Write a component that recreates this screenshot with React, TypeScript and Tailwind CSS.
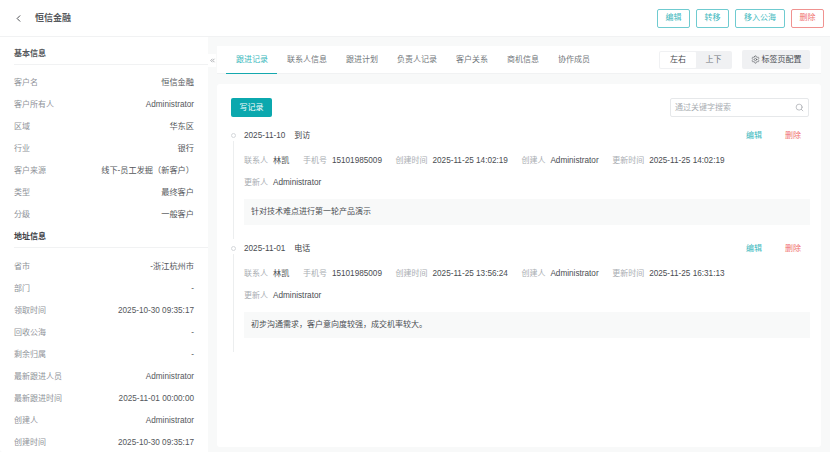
import { ChevronLeft, ChevronsLeft, Search, Settings } from 'lucide-react'

const BASIC = [
  ['客户名', '恒信金融'],
  ['客户所有人', 'Administrator'],
  ['区域', '华东区'],
  ['行业', '银行'],
  ['客户来源', '线下-员工发掘（新客户）'],
  ['类型', '最终客户'],
  ['分级', '一般客户'],
]

const ADDRESS = [
  ['省市', '-浙江杭州市'],
  ['部门', '-'],
  ['领取时间', '2025-10-30 09:35:17'],
  ['回收公海', '-'],
  ['剩余归属', '-'],
  ['最新跟进人员', 'Administrator'],
  ['最新跟进时间', '2025-11-01 00:00:00'],
  ['创建人', 'Administrator'],
  ['创建时间', '2025-10-30 09:35:17'],
]

const TABS = ['跟进记录', '联系人信息', '跟进计划', '负责人记录', '客户关系', '商机信息', '协作成员']

const RECORDS = [
  {
    date: '2025-11-10',
    kind: '到访',
    created: '2025-11-25 14:02:19',
    updated: '2025-11-25 14:02:19',
    note: '针对技术难点进行第一轮产品演示',
  },
  {
    date: '2025-11-01',
    kind: '电话',
    created: '2025-11-25 13:56:24',
    updated: '2025-11-25 16:31:13',
    note: '初步沟通需求，客户意向度较强，成交机率较大。',
  },
]

function Row({ label, value }: { label: string; value: string }) {
  return (
    <div className="flex h-[22px] items-center justify-between pr-[14px]">
      <span className="text-[#8f9399]">{label}</span>
      <span className="text-[8.2px] text-[#55585c]">{value}</span>
    </div>
  )
}

function Field({ label, value }: { label: string; value: string }) {
  return (
    <span className="flex items-center gap-[5px]">
      <span className="text-[#a9adb2]">{label}</span>
      <span className="text-[8.2px] text-[#4a4d52]">{value}</span>
    </span>
  )
}

function Record({ r }: { r: (typeof RECORDS)[number] }) {
  return (
    <div className="relative h-[113px] pl-[27px]">
      <span className="absolute left-[14px] top-[3px] size-[5px] rounded-full border border-[#d5d8db] bg-white" />
      <span className="absolute bottom-[4px] left-[16px] top-[11px] w-px bg-[#eceeef]" />
      <div className="flex h-[12px] items-center pr-[20px]">
        <span className="text-[8.2px] text-[#4a4d52]">{r.date}</span>
        <span className="ml-[9px] text-[#3d4045]">{r.kind}</span>
        <span className="ml-auto text-[#3bb8bd]">编辑</span>
        <span className="ml-[23px] text-[#f0716f]">删除</span>
      </div>
      <div className="mt-[13px] flex h-[12px] items-center gap-[13.5px]">
        <Field label="联系人" value="林凯" />
        <Field label="手机号" value="15101985009" />
        <Field label="创建时间" value={r.created} />
        <Field label="创建人" value="Administrator" />
        <Field label="更新时间" value={r.updated} />
      </div>
      <div className="mt-[10px] flex h-[12px] items-center">
        <Field label="更新人" value="Administrator" />
      </div>
      <div className="mr-[11px] mt-[10px] flex h-[26px] items-center bg-[#f8f9f9] pl-[7px] text-[#4a4d52]">{r.note}</div>
    </div>
  )
}

export default function App() {
  return (
    <div className="flex h-[452px] w-[830px] flex-col overflow-hidden bg-[#f8f9f9] font-['Liberation_Sans','Noto_Sans_CJK_SC',sans-serif] text-[8px] leading-none">
      {/* header */}
      <header className="flex h-[37px] shrink-0 items-center border-b border-[#f1f2f3] bg-white pl-[13px] pr-[6px]">
        <ChevronLeft className="size-[11px] text-[#3d4045]" strokeWidth={2} />
        <span className="ml-[11px] text-[9px] font-bold text-[#55585c]">恒信金融</span>
        <div className="ml-auto flex gap-[6px]">
          <button className="h-[19px] w-[33px] rounded-[2px] border border-[#6fcbd0] text-[#3bb8bd]">编辑</button>
          <button className="h-[19px] w-[33px] rounded-[2px] border border-[#6fcbd0] text-[#3bb8bd]">转移</button>
          <button className="h-[19px] w-[50px] rounded-[2px] border border-[#6fcbd0] text-[#3bb8bd]">移入公海</button>
          <button className="h-[19px] w-[33px] rounded-[2px] border border-[#f09290] text-[#f0716f]">删除</button>
        </div>
      </header>

      <div className="flex min-h-0 flex-1">
        {/* customer details */}
        <aside className="w-[208px] shrink-0 overflow-hidden rounded-bl-[3px] bg-white pl-[14px]">
          <div className="flex h-[28px] items-center border-b border-[#f1f2f3] pt-[7px] font-bold text-[#55585c]">基本信息</div>
          <div className="mt-[7px]">
            {BASIC.map(([label, value]) => (
              <Row key={label} label={label} value={value} />
            ))}
          </div>
          <div className="flex h-[22px] items-center border-b border-[#f1f2f3] pt-px font-bold text-[#3d4045]">地址信息</div>
          <div className="mt-[8px]">
            {ADDRESS.map(([label, value]) => (
              <Row key={label} label={label} value={value} />
            ))}
          </div>
        </aside>

        <main className="relative min-w-0 flex-1 px-[9px] pt-[9px]">
          <button className="absolute left-0 top-[17px] flex h-[13px] w-[8px] items-center justify-center bg-white text-[#73777c]">
            <ChevronsLeft className="size-[7px]" strokeWidth={2} />
          </button>

          {/* tabs */}
          <div className="flex h-[28px] items-stretch border-b border-[#f1f2f3] bg-white">
            <div className="flex gap-[19px] pl-[19px]">
              {TABS.map((t, i) => (
                <span
                  key={t}
                  className={
                    i === 0
                      ? 'relative flex items-center text-[#3bb8bd]'
                      : 'flex items-center text-[#73777c]'
                  }
                >
                  {t}
                  {i === 0 && <span className="absolute -bottom-px -left-[10px] -right-[9px] h-px bg-[#14a8ae]" />}
                </span>
              ))}
            </div>
            <div className="ml-auto flex items-center gap-[10px] pr-[11px]">
              <div className="flex h-[18px] w-[73px] rounded-[2px] bg-[#f0f1f3] p-px">
                <span className="flex w-[36px] items-center justify-center rounded-[1px] bg-white text-[#4a4d52]">左右</span>
                <span className="flex flex-1 items-center justify-center text-[#73777c]">上下</span>
              </div>
              <button className="flex h-[19px] w-[68px] items-center justify-center gap-[2px] rounded-[2px] bg-[#f0f1f3] text-[#4a4d52]">
                <Settings className="size-[9px]" strokeWidth={1.5} />
                标签页配置
              </button>
            </div>
          </div>

          {/* follow-up records */}
          <div className="mt-[10px] h-[363px] rounded-[3px] bg-white pt-[14px]">
            <div className="flex h-[19px] items-center justify-between pl-[14px] pr-[12px]">
              <button className="h-[19px] w-[41px] rounded-[2px] bg-[#0ba8ae] text-white">写记录</button>
              <div className="flex h-[19px] w-[139px] items-center justify-between rounded-[2px] border border-[#e6e8ea] px-[4px] text-[#a9adb2]">
                通过关键字搜索
                <Search className="size-[9px] text-[#8f9399]" strokeWidth={1.5} />
              </div>
            </div>
            <div className="mt-[13px]">
              {RECORDS.map((r) => (
                <Record key={r.date} r={r} />
              ))}
            </div>
          </div>
        </main>
      </div>
    </div>
  )
}
